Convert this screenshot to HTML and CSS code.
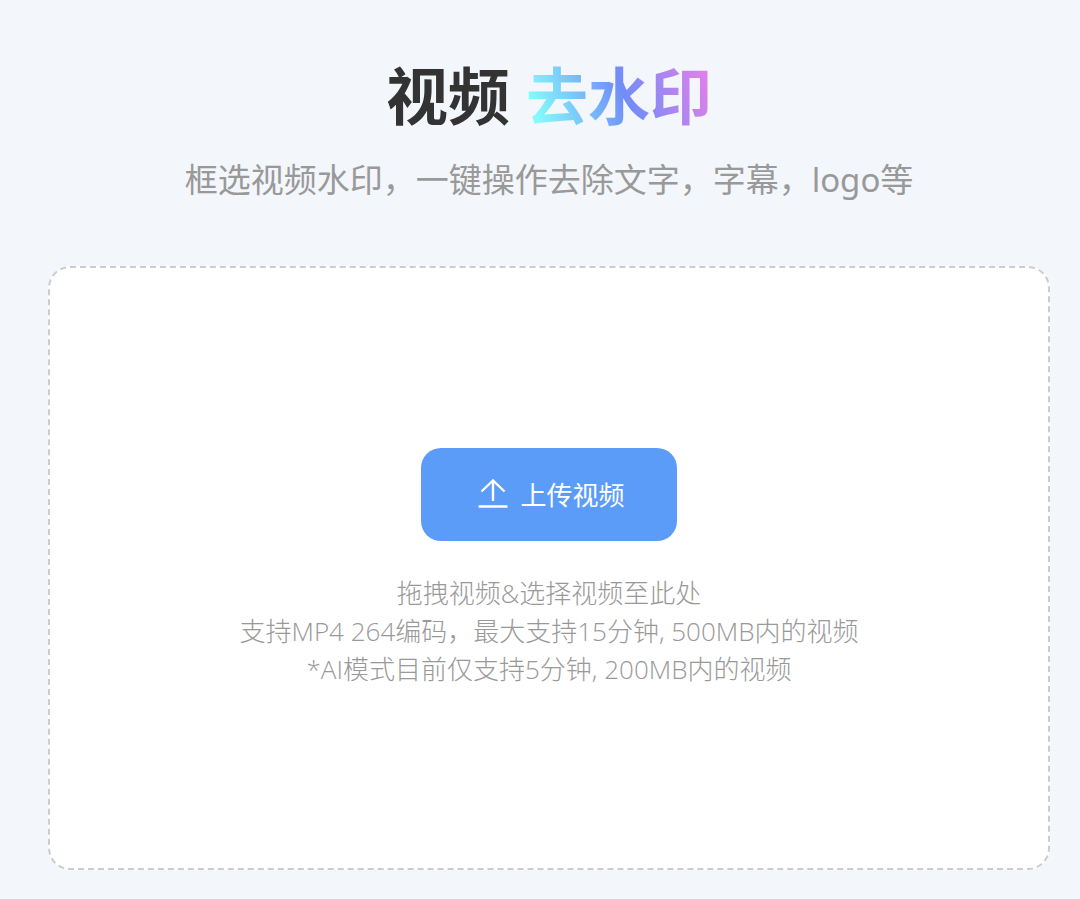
FILE: index.html
```html
<!DOCTYPE html>
<html lang="zh-CN">
<head>
  <meta charset="UTF-8" />
  <meta name="viewport" content="width=device-width, initial-scale=1" />
  <title>视频去水印</title>
  <link rel="stylesheet" href="styles.css">
</head>
<body>
  <main class="page">
    <header class="header">
      <h1>视频 <span class="highlight">去水印</span></h1>
      <p class="subtitle">框选视频水印，一键操作去除文字，字幕，logo等</p>
    </header>

    <section class="upload-box">
      <button type="button" class="upload-btn">
        <svg class="upload-icon" viewBox="0 0 30 30" aria-hidden="true">
          <path d="M15 22V2M3.5 12.5L15 1.5L26.500 12.500M.5 27.500H29.500" />
        </svg>
        <span>上传视频</span>
      </button>
      <div class="tips">
        <p>拖拽视频&amp;选择视频至此处</p>
        <p>支持MP4 264编码，最大支持15分钟, 500MB内的视频</p>
        <p>*AI模式目前仅支持5分钟, 200MB内的视频</p>
      </div>
    </section>
  </main>
</body>
</html>
```

FILE: styles.css
```css
* {
  box-sizing: border-box;
}
body {
  margin: 0;
  background: #f3f6fb;
  font-family: "Open Sans", "Noto Sans CJK SC", sans-serif;
}
.page {
  padding: 56px 30px 28px 48px;
}
.header {
  text-align: center;
  margin-bottom: 62px;
}
h1 {
  margin: 0;
  font-size: 62px;
  line-height: 80px;
  font-weight: 700;
  color: #333;
}
.highlight {
  display: inline-block;
  background: linear-gradient(70deg, #84fbfb 8%, #6f8df9 52%, #e57fe8 96%);
  -webkit-background-clip: text;
  background-clip: text;
  color: transparent;
}
.subtitle {
  margin: 20px 0 0;
  font-family: "Noto Sans", "Noto Sans CJK SC", sans-serif;
  font-size: 33px;
  line-height: 48px;
  color: #999;
}
.upload-box {
  display: flex;
  flex-direction: column;
  align-items: center;
  padding: 180px 20px;
  border: 2px dashed #ccc;
  border-radius: 22px;
  background: #fff;
}
.upload-btn {
  display: flex;
  align-items: center;
  justify-content: center;
  gap: 12px;
  padding: 28px 52px 26px 57px;
  border: none;
  border-radius: 20px;
  background: #5b9cf8;
  color: #fff;
  font-family: inherit;
  font-size: 26px;
  line-height: 39px;
  cursor: pointer;
}
.upload-icon {
  width: 30px;
  height: 30px;
  margin-bottom: 4px;
  fill: none;
  stroke: #fff;
  stroke-width: 2.4;
}
.tips {
  margin-top: 33px;
  text-align: center;
  font-size: 26px;
  line-height: 38px;
  font-weight: 300;
  color: #999;
}
.tips p {
  margin: 0;
}
```
